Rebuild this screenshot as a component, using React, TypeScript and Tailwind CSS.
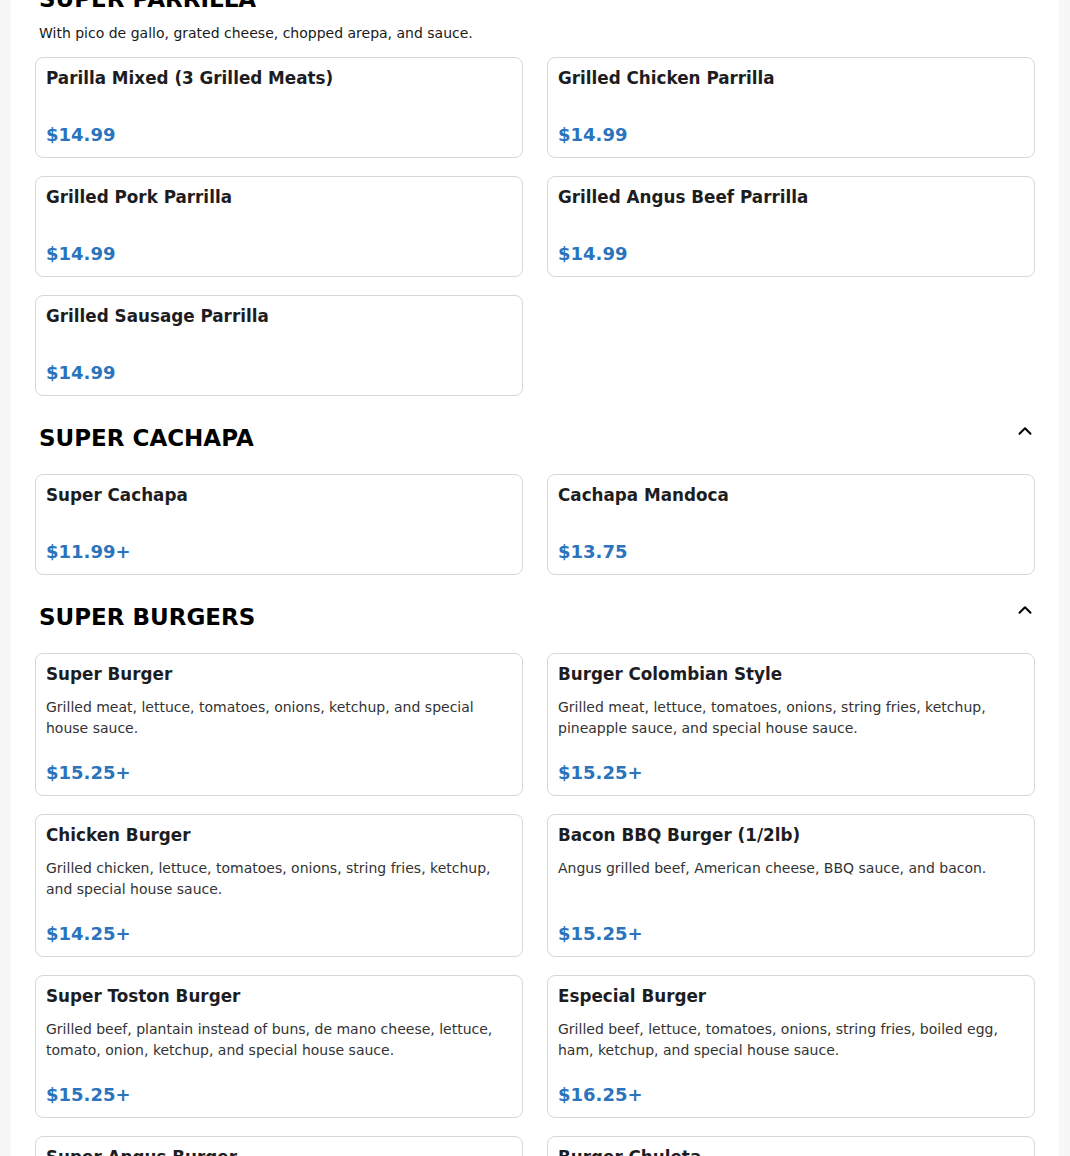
import { ChevronUp } from 'lucide-react';

type Item = { name: string; desc?: string; price: string };
type Section = { title: string; subtitle?: string; items: Item[] };

const sections: Section[] = [
  {
    title: 'SUPER PARRILLA',
    subtitle: 'With pico de gallo, grated cheese, chopped arepa, and sauce.',
    items: [
      { name: 'Parilla Mixed (3 Grilled Meats)', price: '$14.99' },
      { name: 'Grilled Chicken Parrilla', price: '$14.99' },
      { name: 'Grilled Pork Parrilla', price: '$14.99' },
      { name: 'Grilled Angus Beef Parrilla', price: '$14.99' },
      { name: 'Grilled Sausage Parrilla', price: '$14.99' },
    ],
  },
  {
    title: 'SUPER CACHAPA',
    items: [
      { name: 'Super Cachapa', price: '$11.99+' },
      { name: 'Cachapa Mandoca', price: '$13.75' },
    ],
  },
  {
    title: 'SUPER BURGERS',
    items: [
      {
        name: 'Super Burger',
        desc: 'Grilled meat, lettuce, tomatoes, onions, ketchup, and special house sauce.',
        price: '$15.25+',
      },
      {
        name: 'Burger Colombian Style',
        desc: 'Grilled meat, lettuce, tomatoes, onions, string fries, ketchup, pineapple sauce, and special house sauce.',
        price: '$15.25+',
      },
      {
        name: 'Chicken Burger',
        desc: 'Grilled chicken, lettuce, tomatoes, onions, string fries, ketchup, and special house sauce.',
        price: '$14.25+',
      },
      {
        name: 'Bacon BBQ Burger (1/2lb)',
        desc: 'Angus grilled beef, American cheese, BBQ sauce, and bacon.',
        price: '$15.25+',
      },
      {
        name: 'Super Toston Burger',
        desc: 'Grilled beef, plantain instead of buns, de mano cheese, lettuce, tomato, onion, ketchup, and special house sauce.',
        price: '$15.25+',
      },
      {
        name: 'Especial Burger',
        desc: 'Grilled beef, lettuce, tomatoes, onions, string fries, boiled egg, ham, ketchup, and special house sauce.',
        price: '$16.25+',
      },
      {
        name: 'Super Angus Burger',
        desc: 'Angus grilled beef, lettuce, tomatoes, onions, ketchup, and special house sauce.',
        price: '$16.25+',
      },
      {
        name: 'Burger Chuleta',
        desc: 'Grilled pork chop, lettuce, tomatoes, onions, string fries, ketchup, and special house sauce.',
        price: '$15.25+',
      },
    ],
  },
];

function MenuCard({ item }: { item: Item }) {
  return (
    <div className="flex flex-col rounded-lg border border-[#d6d6d6] bg-white px-[10px] pt-[10px] pb-[12px]">
      <h3 className="text-[16.8px] font-bold leading-5 text-[#1d1d1f]">{item.name}</h3>
      <p className="mt-[13px] text-sm leading-[21px] text-[#333333]">{item.desc}</p>
      <div className="mt-auto pt-6 text-[18px] font-bold leading-5 text-[#2b74bd]">{item.price}</div>
    </div>
  );
}

export default function App() {
  return (
    <div className="h-[1156px] overflow-hidden bg-[#f7f7f7] font-['DejaVu_Sans',sans-serif]">
      <div className="mx-auto w-[1048px] bg-white px-6 pb-10">
        {sections.map((section, i) => (
          <section key={section.title} className={i === 0 ? '-mt-[17px]' : 'mt-[26px]'}>
            <div className="flex items-start justify-between">
              <h2 className="pl-1 text-[23px] font-bold leading-8 text-black">{section.title}</h2>
              {i > 0 && (
                <button className="-mt-[2px] -mr-px text-black">
                  <ChevronUp size={22} strokeWidth={2.2} />
                </button>
              )}
            </div>
            {section.subtitle && (
              <p className="mt-2 pl-1 text-sm leading-5 text-[#1a1a1a]">{section.subtitle}</p>
            )}
            <div className={`grid grid-cols-2 gap-x-6 gap-y-[18px] ${section.subtitle ? 'mt-[14px]' : 'mt-5'}`}>
              {section.items.map((item) => (
                <MenuCard key={item.name} item={item} />
              ))}
            </div>
          </section>
        ))}
      </div>
    </div>
  );
}
